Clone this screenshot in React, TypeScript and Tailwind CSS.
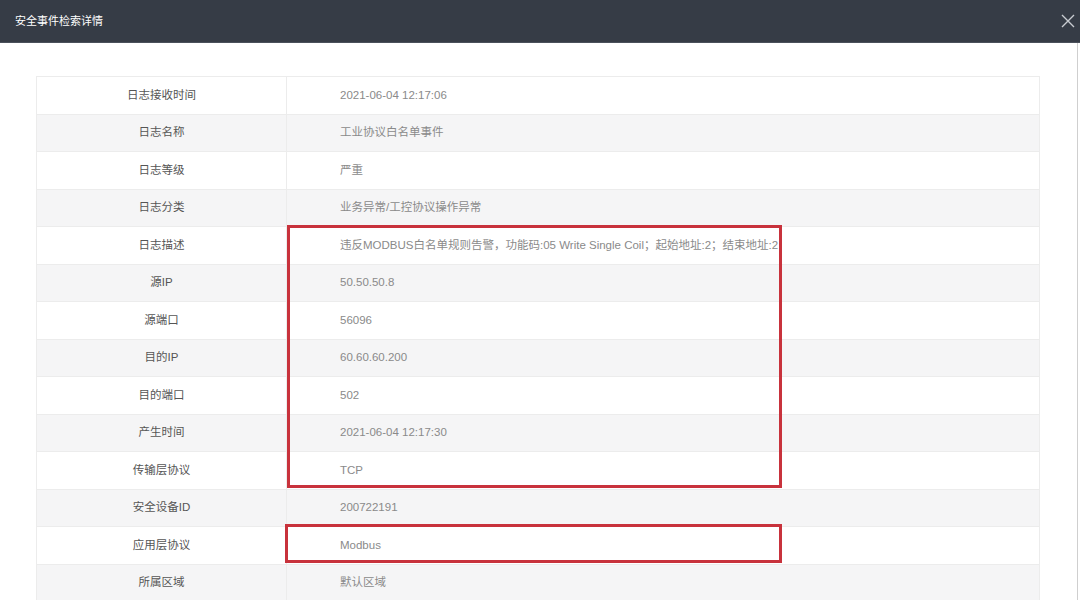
import React from 'react';

const rows: [string, string][] = [
  ['日志接收时间', '2021-06-04 12:17:06'],
  ['日志名称', '工业协议白名单事件'],
  ['日志等级', '严重'],
  ['日志分类', '业务异常/工控协议操作异常'],
  ['日志描述', '违反MODBUS白名单规则告警，功能码:05 Write Single Coil；起始地址:2；结束地址:2'],
  ['源IP', '50.50.50.8'],
  ['源端口', '56096'],
  ['目的IP', '60.60.60.200'],
  ['目的端口', '502'],
  ['产生时间', '2021-06-04 12:17:30'],
  ['传输层协议', 'TCP'],
  ['安全设备ID', '200722191'],
  ['应用层协议', 'Modbus'],
  ['所属区域', '默认区域'],
];

export default function App() {
  return (
    <div className="w-[1080px] h-[600px] overflow-hidden bg-white flex flex-col font-['Liberation_Sans','Noto_Sans_CJK_SC',sans-serif]">
      <div className="h-[43px] shrink-0 bg-[#363c46] border-b border-[#4b515b] flex items-center justify-between pl-[15px] pr-[4px]">
        <span className="text-[11px] text-white">安全事件检索详情</span>
        <svg width="16" height="16" viewBox="0 0 16 16" className="text-[#c9ccd1]">
          <path d="M2 2 L14 14 M14 2 L2 14" stroke="currentColor" strokeWidth="1.4" fill="none" />
        </svg>
      </div>

      <div className="flex-1 mr-[2px] border-r border-[#cfcfcf] pt-[33px] pl-[36px]">
        <div className="relative w-[1004px] border border-[#ececec]">
          {rows.map(([k, v], i) => (
            <div
              key={k}
              className={`flex h-[37.5px] border-b border-[#ececec] ${i % 2 === 1 ? 'bg-[#f5f5f6]' : 'bg-white'}`}
            >
              <div className="w-[250px] shrink-0 border-r border-[#ececec] flex items-center justify-center text-[11.5px] text-[#555]">
                {k}
              </div>
              <div className="flex-1 flex items-center pl-[53px] text-[11.5px] text-[#8a8a8a] whitespace-nowrap">
                {v}
              </div>
            </div>
          ))}

          {/* red highlight annotations drawn over the table */}
          <div className="absolute left-[250px] top-[148px] w-[495px] h-[263px] border-[3px] border-[#c8323c] pointer-events-none" />
          <div className="absolute left-[248px] top-[447px] w-[497px] h-[39px] border-[3px] border-[#c8323c] pointer-events-none" />
        </div>
      </div>
    </div>
  );
}
